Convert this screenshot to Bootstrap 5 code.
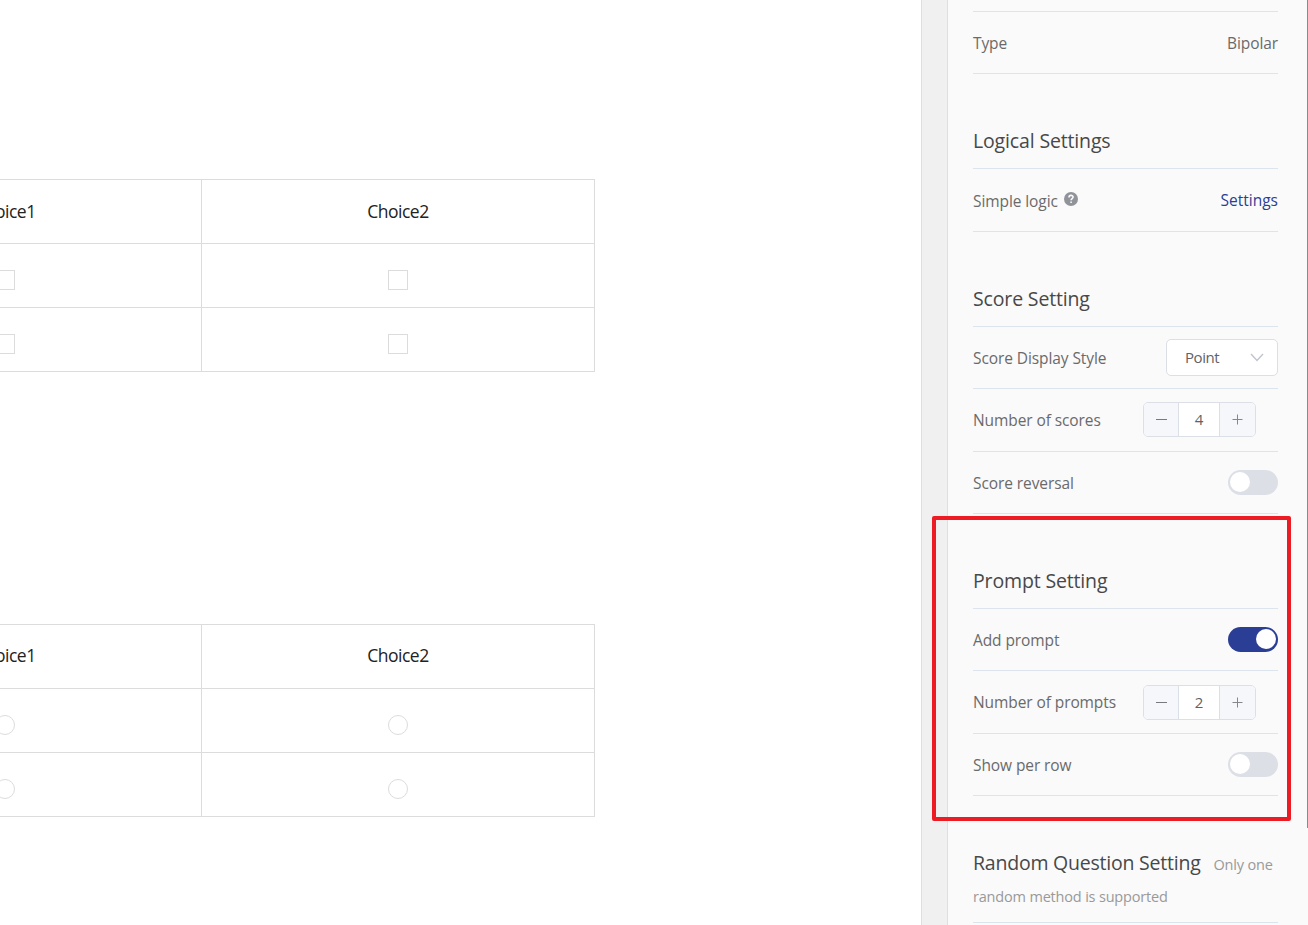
<!DOCTYPE html>
<html lang="en">
<head>
<meta charset="utf-8">
<title>Question settings</title>
<link rel="stylesheet" href="https://cdn.jsdelivr.net/npm/bootstrap@5.3.0/dist/css/bootstrap.min.css">
<style>
body{font-family:"Open Sans","Noto Sans",sans-serif;font-size:15.5px;color:#6a6a6a;background:#fff}
.canvas-area{width:921px;padding-top:179px;overflow:hidden}
.matrix{grid-template-columns:392px 392px;grid-auto-rows:63px;gap:1px;padding:1px;width:787px;margin-left:-192px;background:#dcdcdc}
.matrix + .matrix{margin-top:252px}
.matrix > div{background:#fff}
.choice-title{font-size:17.5px;letter-spacing:-.5px;color:#222}
.matrix + .matrix .choice-title{padding-bottom:2px}
.tick,.dot{width:20px;height:20px;border:1px solid #dcdcdc;margin-top:9px}
.dot{border-radius:50%}
.gutter{width:26px;border-left:1px solid #dcdfe6;background:#f0f0f0}
.panel{width:361px;border-left:1px solid #dcdfe6;background:#fafafa;padding:0 30px 0 25px}
.line{height:62px;border-bottom:1px solid #dce5ed}
.line.tall{height:63px}
.line:first-child{height:12px}
.tag{padding-top:3px;letter-spacing:-.09px;white-space:nowrap}
.tall > .tag{padding-top:1px}
.heading{height:95px;border-bottom:1px solid #dce5ed;padding-top:51px;font-size:19.5px;line-height:32px;letter-spacing:-.15px;color:#484848;font-weight:400;margin:0;white-space:nowrap}
.heading.long{height:127px}
.heading.long .note{line-height:30px}
.heading.long .title-text{letter-spacing:-.22px}
.note{font-size:14.5px;color:#999;letter-spacing:-.18px}
.note-more{display:block;margin-top:2px}
.settings{color:#2b3e95;text-decoration:none;padding-top:2px}
.picker{width:112px;height:37px;border:1px solid #dcdfe6;border-radius:5px;background:#fff;padding:0 13px 0 18px;font-size:15px;letter-spacing:-.45px;color:#606266}
.stepper{width:113px;height:35px;border:1px solid #dcdfe6;border-radius:5px;background:#fff;overflow:hidden;margin-right:22px;font-size:15px;color:#606266}
.stepper.raised{margin-bottom:1px}
.stepper span{width:35px;background:#f5f7fa}
.stepper span:first-child{border-right:1px solid #dcdfe6}
.stepper span:last-child{width:36px;border-left:1px solid #dcdfe6}
.toggle{width:50px;height:25px;border-radius:13px;background:#dcdfe6;padding:2px}
.toggle i{width:20px;height:20px;border-radius:50%;background:#fff}
.toggle.on{background:#2b3e95}
.help-mark{margin:5px 0 0 6px}
.highlight{left:932px;top:516px;width:359px;height:305px;border:4px solid #ed1c24;border-radius:2px}
.thumb{right:0;top:0;width:1px;height:828px;background:#8a8a8a}
</style>
</head>
<body>
<div class="d-flex vh-100 overflow-hidden position-relative">
  <main class="canvas-area flex-shrink-0">
    <div class="matrix d-grid">
      <div class="d-flex align-items-center justify-content-center choice-title">Choice1</div>
      <div class="d-flex align-items-center justify-content-center choice-title">Choice2</div>
      <div class="d-flex align-items-center justify-content-center"><span class="tick"></span></div>
      <div class="d-flex align-items-center justify-content-center"><span class="tick"></span></div>
      <div class="d-flex align-items-center justify-content-center"><span class="tick"></span></div>
      <div class="d-flex align-items-center justify-content-center"><span class="tick"></span></div>
    </div>
    <div class="matrix d-grid">
      <div class="d-flex align-items-center justify-content-center choice-title">Choice1</div>
      <div class="d-flex align-items-center justify-content-center choice-title">Choice2</div>
      <div class="d-flex align-items-center justify-content-center"><span class="dot"></span></div>
      <div class="d-flex align-items-center justify-content-center"><span class="dot"></span></div>
      <div class="d-flex align-items-center justify-content-center"><span class="dot"></span></div>
      <div class="d-flex align-items-center justify-content-center"><span class="dot"></span></div>
    </div>
  </main>
  <div class="gutter flex-shrink-0"></div>
  <aside class="panel flex-shrink-0">
    <div class="line"></div>
    <div class="line d-flex align-items-center justify-content-between"><span class="tag">Type</span><span class="tag">Bipolar</span></div>
    <h2 class="heading">Logical Settings</h2>
    <div class="line tall d-flex align-items-center justify-content-between">
      <span class="d-flex"><span class="tag">Simple logic</span>
        <svg class="help-mark" width="14" height="14" viewBox="0 0 14 14"><circle cx="7" cy="7" r="7" fill="#909399"/><path d="M5 5.4C5 2.7 9.1 2.8 9.1 5.1C9.1 6.6 7.1 6.6 7.1 8.3M7.1 9.5V11" fill="none" stroke="#fafafa" stroke-width="1.6"/></svg>
      </span>
      <a class="settings" href="#">Settings</a>
    </div>
    <h2 class="heading">Score Setting</h2>
    <div class="line d-flex align-items-center justify-content-between"><span class="tag">Score Display Style</span>
      <div class="picker d-flex align-items-center justify-content-between"><span>Point</span>
        <svg width="14" height="9" viewBox="0 0 14 9"><path d="M1 1L7 7.5L13 1" fill="none" stroke="#c0c4cc" stroke-width="1.4"/></svg>
      </div>
    </div>
    <div class="line tall d-flex align-items-center justify-content-between"><span class="tag">Number of scores</span>
      <div class="stepper raised d-flex text-center">
        <span class="d-flex align-items-center justify-content-center"><svg width="11" height="11" viewBox="0 0 11 11"><path d="M0 5.5H11" stroke="#77797e"/></svg></span>
        <div class="flex-fill d-flex align-items-center justify-content-center">4</div>
        <span class="d-flex align-items-center justify-content-center"><svg width="11" height="11" viewBox="0 0 11 11"><path d="M0.5 5.5H10.5M5.5 0.5V10.5" stroke="#85878c"/></svg></span>
      </div>
    </div>
    <div class="line d-flex align-items-center justify-content-between"><span class="tag">Score reversal</span><div class="toggle d-flex"><i></i></div></div>
    <h2 class="heading">Prompt Setting</h2>
    <div class="line d-flex align-items-center justify-content-between"><span class="tag">Add prompt</span><div class="toggle on d-flex justify-content-end"><i></i></div></div>
    <div class="line tall d-flex align-items-center justify-content-between"><span class="tag">Number of prompts</span>
      <div class="stepper d-flex text-center">
        <span class="d-flex align-items-center justify-content-center"><svg width="11" height="11" viewBox="0 0 11 11"><path d="M0 5.5H11" stroke="#77797e"/></svg></span>
        <div class="flex-fill d-flex align-items-center justify-content-center">2</div>
        <span class="d-flex align-items-center justify-content-center"><svg width="11" height="11" viewBox="0 0 11 11"><path d="M0.5 5.5H10.5M5.5 0.5V10.5" stroke="#85878c"/></svg></span>
      </div>
    </div>
    <div class="line d-flex align-items-center justify-content-between"><span class="tag">Show per row</span><div class="toggle d-flex"><i></i></div></div>
    <h2 class="heading long"><span class="title-text">Random Question Setting</span> <span class="note ms-2">Only one</span><span class="note note-more">random method is supported</span></h2>
  </aside>
  <div class="highlight position-absolute"></div>
  <div class="thumb position-absolute"></div>
</div>
<script src="https://cdn.jsdelivr.net/npm/bootstrap@5.3.0/dist/js/bootstrap.bundle.min.js"></script>
</body>
</html>
